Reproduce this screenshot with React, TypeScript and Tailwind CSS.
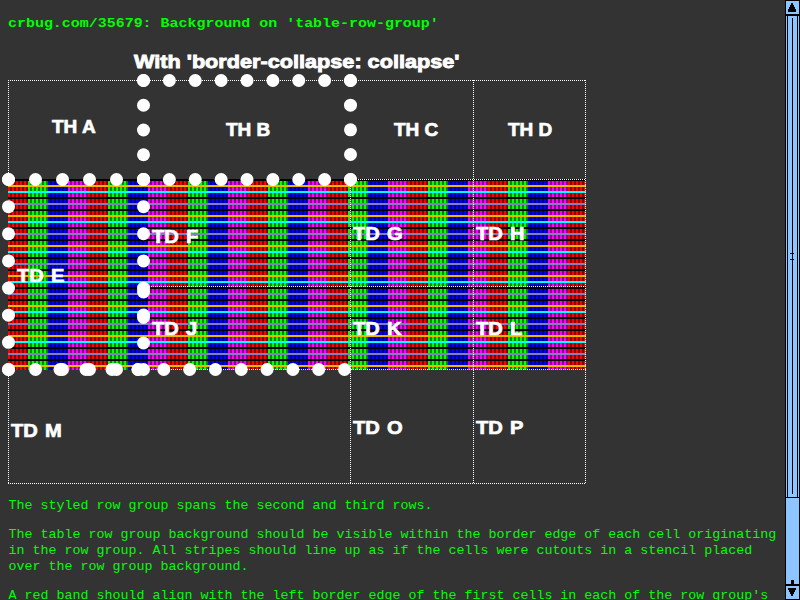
const range = (n: number) => Array.from({ length: n }, (_, i) => i);

// Dotted border runs: first dot, last dot, number of dots
const runs: [number, number, number, number, number][] = [
  [143.5, 80.5, 350.5, 80.5, 9],
  [143.5, 80.5, 143.5, 179.5, 5],
  [350.5, 80.5, 350.5, 154.5, 4],
  [350.5, 179.5, 350.5, 179.5, 1],
  [8.5, 179.5, 143.5, 179.5, 6],
  [143.5, 179.5, 350.5, 179.5, 9],
  [8.5, 179.5, 8.5, 369.5, 8],
  [143.5, 179.5, 143.5, 288, 5],
  [143.5, 292, 143.5, 343, 3],
  [143.5, 315, 143.5, 315, 1],
  [8.5, 369.5, 143.5, 369.5, 6],
  [60, 369.5, 138, 369.5, 4],
  [138, 369.5, 344.5, 369.5, 9],
];

const stripes =
  "bg-[repeating-linear-gradient(to_bottom,#000_0px,#000_2px,transparent_2px,transparent_6px,#e6b800_6px,#e6b800_8px,transparent_8px,transparent_12px,#00ffff_12px,#00ffff_14px,transparent_14px,transparent_18px,#000_18px,#000_20px,transparent_20px,transparent_24px,#8080c0_24px,#8080c0_26px,transparent_26px,transparent_30px),repeating-linear-gradient(to_right,transparent_0px,transparent_2px,rgba(0,0,0,0.5)_2px,rgba(0,0,0,0.5)_4px),repeating-linear-gradient(to_right,#f00_0px,#f00_20px,#0f0_20px,#0f0_40px,#00f_40px,#00f_60px,#f0f_60px,#f0f_80px)]";

function Borders() {
  return (
    <svg width="592" height="418" viewBox="1 73 592 418" className="pointer-events-none absolute -top-[7px] -left-[7px] z-10">
      <g shapeRendering="crispEdges" stroke="#fff" strokeWidth="1" strokeDasharray="1 1" fill="none">
        <path d="M8 80.5H586M350 179.5H586M143 286.5H586M143 369.5H586M8 483.5H586" />
        <path d="M8.5 80V180M8.5 370V484M350.5 180V484M473.5 80V484M585.5 80V484" />
      </g>
      <g fill="#fff">
        {runs.map(([x1, y1, x2, y2, n], r) =>
          range(n).map((i) => (
            <circle
              key={`${r}-${i}`}
              cx={x1 + ((x2 - x1) * i) / Math.max(1, n - 1)}
              cy={y1 + ((y2 - y1) * i) / Math.max(1, n - 1)}
              r="6.5"
            />
          )),
        )}
      </g>
    </svg>
  );
}

function Label({ text, wide }: { text: string; wide?: boolean }) {
  return (
    <span className={`relative z-20 inline-block origin-left ${wide ? "scale-x-[1.06] [word-spacing:1.5px]" : ""}`}>
      {text}
    </span>
  );
}

function Table() {
  return (
    <section className="relative ml-2 flex h-[404px] w-[578px] shrink-0 flex-col text-[19px] leading-5 font-bold text-white [-webkit-text-stroke:0.7px_#fff]">
      <Borders />
      <div className="grid h-[99px] grid-cols-[135px_207px_123px_112px] pt-[40px]">
        <span className="-mt-[3px] pl-[44px]"><Label text="TH A" /></span>
        <span className="pl-[83px]"><Label text="TH B" /></span>
        <span className="pl-[44px]"><Label text="TH C" /></span>
        <span className="pl-[35px]"><Label text="TH D" /></span>
      </div>
      <div className={`grid h-[191px] grid-cols-[135px_207px_123px_113px] grid-rows-[107px_84px] ${stripes}`}>
        <span className="row-span-2 pt-[87px] pl-[9px]"><Label wide text="TD E" /></span>
        <span className="pt-[48px] pl-[9px]"><Label wide text="TD F" /></span>
        <span className="pt-[45px] pl-[3px]"><Label wide text="TD G" /></span>
        <span className="pt-[45px] pl-[3px]"><Label wide text="TD H" /></span>
        <span className="pt-[33px] pl-[9px]"><Label wide text="TD J" /></span>
        <span className="pt-[33px] pl-[3px]"><Label wide text="TD K" /></span>
        <span className="pt-[33px] pl-[3px]"><Label wide text="TD L" /></span>
      </div>
      <div className="grid h-[114px] grid-cols-[342px_123px_113px] pt-[48px]">
        <span className="pt-[3px] pl-[3px]"><Label wide text="TD M" /></span>
        <span className="pl-[3px]"><Label wide text="TD O" /></span>
        <span className="pl-[3px]"><Label wide text="TD P" /></span>
      </div>
    </section>
  );
}

function Scrollbar() {
  return (
    <svg width="15" height="600" shapeRendering="crispEdges" className="shrink-0">
      <rect width="15" height="600" fill="#000" />
      <rect x="1" y="1" width="13" height="13" fill="#8cc5ff" />
      <path d="M6 3h2v2h1v2h1v2h1v3H3V9h1V7h1V5h1z" fill="#000" />
      <rect x="1" y="16" width="13" height="481" fill="#8cc5ff" />
      <path d="M2.5 16V497M12.5 16V497M7.5 18V494M5 253.500H9M5 259.500H9" stroke="#000" />
      <rect x="1" y="498" width="13" height="86" fill="#8cc5ff" />
      <rect x="6" y="580" width="3" height="4" fill="#000" />
      <rect x="1" y="586" width="13" height="13" fill="#8cc5ff" />
      <path d="M3 588h8v2h-1v2H9v2H8v2H6v-2H5v-2H4v-2H3z" fill="#000" />
    </svg>
  );
}

export default function App() {
  return (
    <div className="flex h-[600px] w-[800px] overflow-hidden bg-[#333333] font-['Liberation_Sans',sans-serif]">
      <main className="flex w-[785px] shrink-0 flex-col">
        <h1 className="h-[50px] shrink-0 pt-[15px] pl-2 font-['Liberation_Mono',monospace] text-[13.33px] leading-[18px] font-bold text-[#00ff00]">
          <span className="inline-block origin-left scale-x-[1.122]">crbug.com/35679: Background on 'table-row-group'</span>
        </h1>
        <h2 className="h-[30px] shrink-0 pl-[134px] text-[19px] leading-6 font-bold whitespace-nowrap text-white [-webkit-text-stroke:0.9px_#fff]">
          <span className="inline-block origin-left scale-x-[1.14]">With 'border-collapse: collapse'</span>
        </h2>
        <Table />
        <div className="flex flex-col gap-[13px] pt-[14px] pl-[8.5px] font-['Liberation_Mono',monospace] text-[13.34px] leading-4 whitespace-pre text-[#00ff00]">
          <p>The styled row group spans the second and third rows.</p>
          <p>
            The table row group background should be visible within the border edge of each cell originating
            <br />
            in the row group. All stripes should line up as if the cells were cutouts in a stencil placed
            <br />
            over the row group background.
          </p>
          <p>A red band should align with the left border edge of the first cells in each of the row group's</p>
        </div>
      </main>
      <Scrollbar />
    </div>
  );
}
